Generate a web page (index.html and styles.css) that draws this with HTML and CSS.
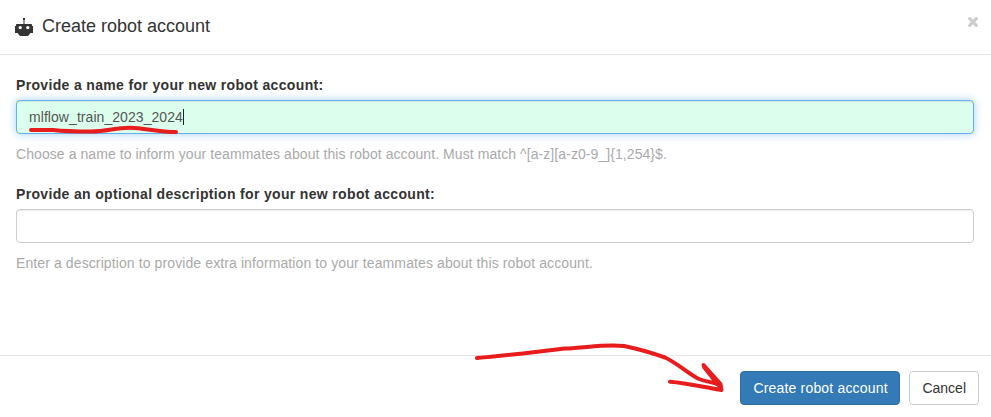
FILE: index.html
```html
<!DOCTYPE html>
<html lang="en">
<head>
<meta charset="utf-8">
<title>Create robot account</title>
<link rel="stylesheet" href="styles.css">
</head>
<body>
<div class="dialog">
  <header class="header">
    <svg class="robot" viewBox="0 0 18 18" aria-hidden="true">
      <path fill="#333" fill-rule="evenodd" d="M8.500 2H8V0h2v2h-.5v4H16.200a.8.8 0 0 1 .8.8V8h1v7h-2.500l-2.500 3H5L2.500 15H0V8h1V6.800a.8.8 0 0 1 .8-.8H8.500zM5.200 7.900a1.700 1.700 0 1 0 0 3.400a1.700 1.700 0 1 0 0-3.400zm7.600 0a1.700 1.700 0 1 0 0 3.400a1.700 1.700 0 1 0 0-3.400z"/>
    </svg>
    <h1 class="title">Create robot account</h1>
    <button class="close" aria-label="Close"><svg viewBox="0 0 10 10"><path d="M1.700 1.700l6.600 6.600M8.300 1.700l-6.600 6.600"/></svg></button>
  </header>
  <main class="body">
    <div class="group">
      <label class="label">Provide a name for your new robot account:</label>
      <div class="input valid"><span>mlflow_train_2023_2024</span><i class="caret"></i></div>
      <p class="help pattern">Choose a name to inform your teammates about this robot account. Must match ^[a-z][a-z0-9_]{1,254}$.</p>
    </div>
    <div class="group">
      <label class="label">Provide an optional description for your new robot account:</label>
      <div class="input"></div>
      <p class="help">Enter a description to provide extra information to your teammates about this robot account.</p>
    </div>
  </main>
  <footer class="footer">
    <button class="btn primary">Create robot account</button>
    <button class="btn">Cancel</button>
  </footer>
  <svg class="marks" viewBox="0 0 991 417" aria-hidden="true">
    <path d="M31 130H53C66 131.500 77 131.500 91 131.500C107 131.500 116 127.500 130 127.700C145 128 158 132 176 132"/>
    <path d="M477 358C504 356 534 352 565 348.500C586 348 602 344 624 346C640 349 652 353 665 357.500C677 363 689 374 699 379C707 382 713 382 720 385"/>
    <path d="M670 381.700C688 383 705 387.500 721.500 390L720.500 384L703.500 365L717 384M704 367L720 387"/>
  </svg>
</div>
</body>
</html>
```

FILE: styles.css
```css
* { box-sizing: border-box; }
body {
  margin: 0;
  background: #fff;
  color: #333;
  font: 14px/20px "Liberation Sans", Arial, sans-serif;
}
.dialog {
  position: relative;
  display: flex;
  flex-direction: column;
  height: 417px;
  overflow: hidden;
}
.header {
  display: flex;
  align-items: center;
  height: 55px;
  padding: 0 13px 2px 15px;
  border-bottom: 1px solid #e5e5e5;
}
.robot { width: 18px; height: 18px; margin: 2px 9px 0 0; }
.title { margin: 0; font-size: 18px; line-height: 24px; font-weight: 400; }
.close {
  width: 10px;
  height: 10px;
  margin: -8px 0 0 auto;
  padding: 0;
  border: 0;
  background: none;
}
.close svg { display: block; width: 10px; height: 10px; overflow: visible; }
.close path { stroke: #ccc; stroke-width: 3.2; stroke-linecap: round; fill: none; }
.body { flex: 1; padding: 20px 17px 0 16px; }
.group { height: 109px; }
.label { display: block; margin-bottom: 5px; font-weight: 700; letter-spacing: .34px; }
.input {
  display: flex;
  align-items: center;
  height: 34px;
  padding: 0 12px;
  border: 1px solid #ccc;
  border-radius: 4px;
  color: #555;
  letter-spacing: .06px;
  box-shadow: inset 0 1px 1px rgba(0, 0, 0, .075);
}
.valid {
  border-color: #66afe9;
  background: #dcffed;
  box-shadow: inset 0 1px 1px rgba(0, 0, 0, .075), 0 0 8px rgba(102, 175, 233, .6);
}
.caret { width: 1px; height: 16px; background: #222; }
.help { margin: 10px 0 0; color: #aaa; letter-spacing: .105px; }
.pattern { letter-spacing: .07px; }
.footer {
  display: flex;
  justify-content: flex-end;
  gap: 9px;
  height: 62px;
  padding: 15px 12px 0 0;
  border-top: 1px solid #e5e5e5;
}
.btn {
  height: 34px;
  padding: 0 12px;
  border: 1px solid #ccc;
  border-radius: 4px;
  background: #fff;
  color: #333;
  font: inherit;
  white-space: nowrap;
}
.primary {
  width: 160px;
  border-color: #2e6da4;
  background: #337ab7;
  color: #fff;
  letter-spacing: .18px;
}
.marks {
  position: absolute;
  inset: 0;
  width: 991px;
  height: 417px;
  pointer-events: none;
  fill: none;
  stroke: #e81c1c;
  stroke-width: 4;
  stroke-linecap: round;
  stroke-linejoin: round;
}
```
